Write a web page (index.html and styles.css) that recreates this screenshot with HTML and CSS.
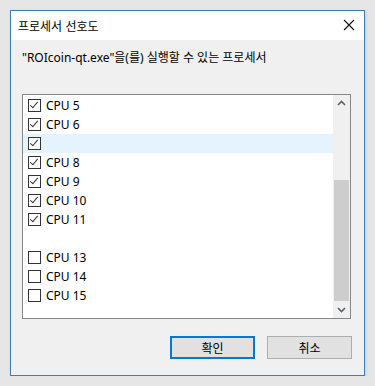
FILE: index.html
```html
<!DOCTYPE html>
<html lang="ko">
<head>
  <meta charset="utf-8">
  <title>프로세서 선호도</title>
  <link rel="stylesheet" href="styles.css">
</head>
<body>
  <div class="dialogo">
    <div class="titulo">
      <span>프로세서 선호도</span>
      <svg class="cerrar" width="12" height="12" viewBox="0 0 12 12">
        <path d="M1 1 L11 11 M11 1 L1 11" stroke="#111" stroke-width="1.1" fill="none"/>
      </svg>
    </div>
    <div class="contenido">
      <p class="etiqueta">"ROIcoin-qt.exe"을(를) 실행할 수 있는 프로세서</p>
      <div class="lista">
        <div class="filas">
          <div class="fila"><span class="caja marcada"></span>CPU 5</div>
          <div class="fila"><span class="caja marcada"></span>CPU 6</div>
          <div class="fila activa"><span class="caja marcada"></span></div>
          <div class="fila"><span class="caja marcada"></span>CPU 8</div>
          <div class="fila"><span class="caja marcada"></span>CPU 9</div>
          <div class="fila"><span class="caja marcada"></span>CPU 10</div>
          <div class="fila"><span class="caja marcada"></span>CPU 11</div>
          <div class="fila"></div>
          <div class="fila"><span class="caja"></span>CPU 13</div>
          <div class="fila"><span class="caja"></span>CPU 14</div>
          <div class="fila"><span class="caja"></span>CPU 15</div>
        </div>
        <div class="scroll">
          <svg class="flecha" width="17" height="17" viewBox="0 0 17 17">
            <path d="M5 10 L8.5 6.5 L12 10" stroke="#606060" stroke-width="1.6" fill="none"/>
          </svg>
          <div class="pista"><div class="pulgar"></div></div>
          <svg class="flecha" width="17" height="17" viewBox="0 0 17 17">
            <path d="M5 7 L8.5 10.5 L12 7" stroke="#606060" stroke-width="1.6" fill="none"/>
          </svg>
        </div>
      </div>
      <div class="botones">
        <button class="btn btn-ok">확인</button>
        <button class="btn">취소</button>
      </div>
    </div>
  </div>
</body>
</html>
```

FILE: styles.css
```css
body {
  margin: 0;
  background: #e6e6e6;
  font-family: 'Noto Sans', 'Noto Sans CJK KR', sans-serif;
  font-size: 12px;
  color: #000;
}

.dialogo {
  margin: 10px 0 0 10px;
  width: 355px;
  height: 366px;
  box-sizing: border-box;
  border: 1px solid #3b7fb8;
  background: #f0f0f0;
  box-shadow: 1px 1px 3px rgba(0, 0, 0, 0.12);
  display: flex;
  flex-direction: column;
}

.titulo {
  height: 29px;
  background: #fff;
  display: flex;
  align-items: center;
  justify-content: space-between;
  padding: 0 9px 0 7px;
  font-family: 'Noto Sans CJK KR', sans-serif;
}

.cerrar {
  margin-bottom: 1px;
}

.contenido {
  padding: 0 12px 0 11px;
}

.etiqueta {
  margin: 10px 0 0 0;
  line-height: 15px;
  font-family: 'Noto Sans', 'Noto Sans CJK KR', sans-serif;
}

.lista {
  margin-top: 29px;
  width: 329px;
  height: 225px;
  box-sizing: border-box;
  border: 1px solid #828790;
  background: #fff;
  display: flex;
}

.filas {
  flex: 1;
  padding-top: 1px;
}

.fila {
  height: 19px;
  display: flex;
  align-items: center;
  padding-left: 5px;
  gap: 5px;
  line-height: 19px;
}

.fila.activa {
  background: #e5f3ff;
}

.caja {
  width: 13px;
  height: 13px;
  box-sizing: border-box;
  border: 1px solid #333;
  background: #fff;
  position: relative;
}

.caja.marcada::after {
  content: "";
  position: absolute;
  left: 3px;
  top: 0px;
  width: 3px;
  height: 7px;
  border-right: 1px solid #333;
  border-bottom: 1px solid #333;
  transform: rotate(40deg);
}

.scroll {
  width: 17px;
  background: #f0f0f0;
  display: flex;
  flex-direction: column;
}

.flecha {
  display: block;
}

.pista {
  flex: 1;
  display: flex;
  flex-direction: column;
  justify-content: flex-end;
}

.pulgar {
  height: 121px;
  margin: 0 1px;
  background: #cdcdcd;
}

.botones {
  margin-top: 17px;
  display: flex;
  justify-content: flex-end;
  gap: 12px;
}

.btn {
  width: 85px;
  height: 23px;
  box-sizing: border-box;
  border: 1px solid #adadad;
  background: #e1e1e1;
  font-family: 'Noto Sans CJK KR', sans-serif;
  font-size: 12px;
  padding: 0;
  color: #000;
}

.btn-ok {
  border: 2px solid #0078d7;
}
```
